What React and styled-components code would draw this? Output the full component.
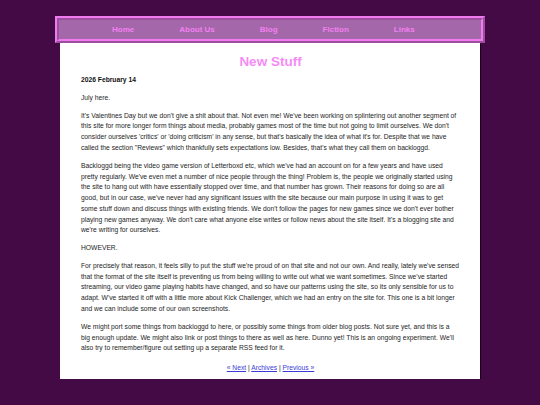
import React from 'react';
import styled, { createGlobalStyle } from 'styled-components';

const GlobalStyle = createGlobalStyle`
  html, body {
    margin: 0;
    padding: 0;
    background: #440a46;
  }
  body {
    font-family: "Liberation Sans", Arial, sans-serif;
  }
`

const navItems = ['Home', 'About Us', 'Blog', 'Fiction', 'Links'];

function App() {
  return (
    <>
      <GlobalStyle />
      <Page>
        <Nav>
          {navItems.map((item) => (
            <NavLink key={item} href="#">{item}</NavLink>
          ))}
        </Nav>
        <Content>
          <Title>New Stuff</Title>
          <DateLine>2026 February 14</DateLine>
          <Para>July here.</Para>
          <Para>
            It's Valentines Day but we don't give a shit about that. Not even me! We've been working on splintering out another segment of this site for more longer form things about media, probably games most of the time but not going to limit ourselves. We don't consider ourselves 'critics' or 'doing criticism' in any sense, but that's basically the idea of what it's for. Despite that we have called the section "Reviews" which thankfully sets expectations low. Besides, that's what they call them on backloggd.
          </Para>
          <Para>
            Backloggd being the video game version of Letterboxd etc, which we've had an account on for a few years and have used pretty regularly. We've even met a number of nice people through the thing! Problem is, the people we originally started using the site to hang out with have essentially stopped over time, and that number has grown. Their reasons for doing so are all good, but in our case, we've never had any significant issues with the site because our main purpose in using it was to get some stuff down and discuss things with existing friends. We don't follow the pages for new games since we don't ever bother playing new games anyway. We don't care what anyone else writes or follow news about the site itself. It's a blogging site and we're writing for ourselves.
          </Para>
          <Para>HOWEVER.</Para>
          <Para>
            For precisely that reason, it feels silly to put the stuff we're proud of on that site and not our own. And really, lately we've sensed that the format of the site itself is preventing us from being willing to write out what we want sometimes. Since we've started streaming, our video game playing habits have changed, and so have our patterns using the site, so its only sensible for us to adapt. W've started it off with a little more about Kick Challenger, which we had an entry on the site for. This one is a bit longer and we can include some of our own screenshots.
          </Para>
          <Para>
            We might port some things from backloggd to here, or possibly some things from older blog posts. Not sure yet, and this is a big enough update. We might also link or post things to there as well as here. Dunno yet! This is an ongoing experiment. We'll also try to remember/figure out setting up a separate RSS feed for it.
          </Para>
          <Pager>
            <PagerLink href="#">« Next</PagerLink> | <PagerLink href="#">Archives</PagerLink> | <PagerLink href="#">Previous »</PagerLink>
          </Pager>
        </Content>
      </Page>
    </>
  )
}

const Page = styled.div`
  width: 430px;
  margin: 16px auto 0;
  display: flex;
  flex-direction: column;
  align-items: center;
`
const Nav = styled.nav`
  box-sizing: border-box;
  width: 430px;
  height: 27px;
  border: 4px ridge #f07af0;
  background: #a467a9;
  display: flex;
  align-items: center;
  gap: 45px;
  padding-left: 53px;
`
const NavLink = styled.a`
  color: #f27ff2;
  font-weight: bold;
  font-size: 8px;
  text-decoration: none;
`
const Content = styled.div`
  box-sizing: border-box;
  width: 420px;
  background: #ffffff;
  padding: 10.5px 20px 4.6px 21px;
  box-shadow: 1px 1px 1px rgba(0, 0, 0, 0.6);
  color: #1e1e1e;
  font-size: 6.72px;
  line-height: 10.75px;
`
const Title = styled.h1`
  margin: 0 0 6.5px;
  text-align: center;
  color: #f58cf5;
  font-size: 13.5px;
  line-height: 15px;
  font-weight: bold;
`
const DateLine = styled.p`
  margin: 0 0 7.1px;
  font-weight: bold;
  color: #111111;
`
const Para = styled.p`
  margin: 7.1px 0;
`
const Pager = styled.div`
  margin-top: 9.25px;
  text-align: center;
`
const PagerLink = styled.a`
  color: #3b3bd6;
  text-decoration: underline;
`

export default App;
